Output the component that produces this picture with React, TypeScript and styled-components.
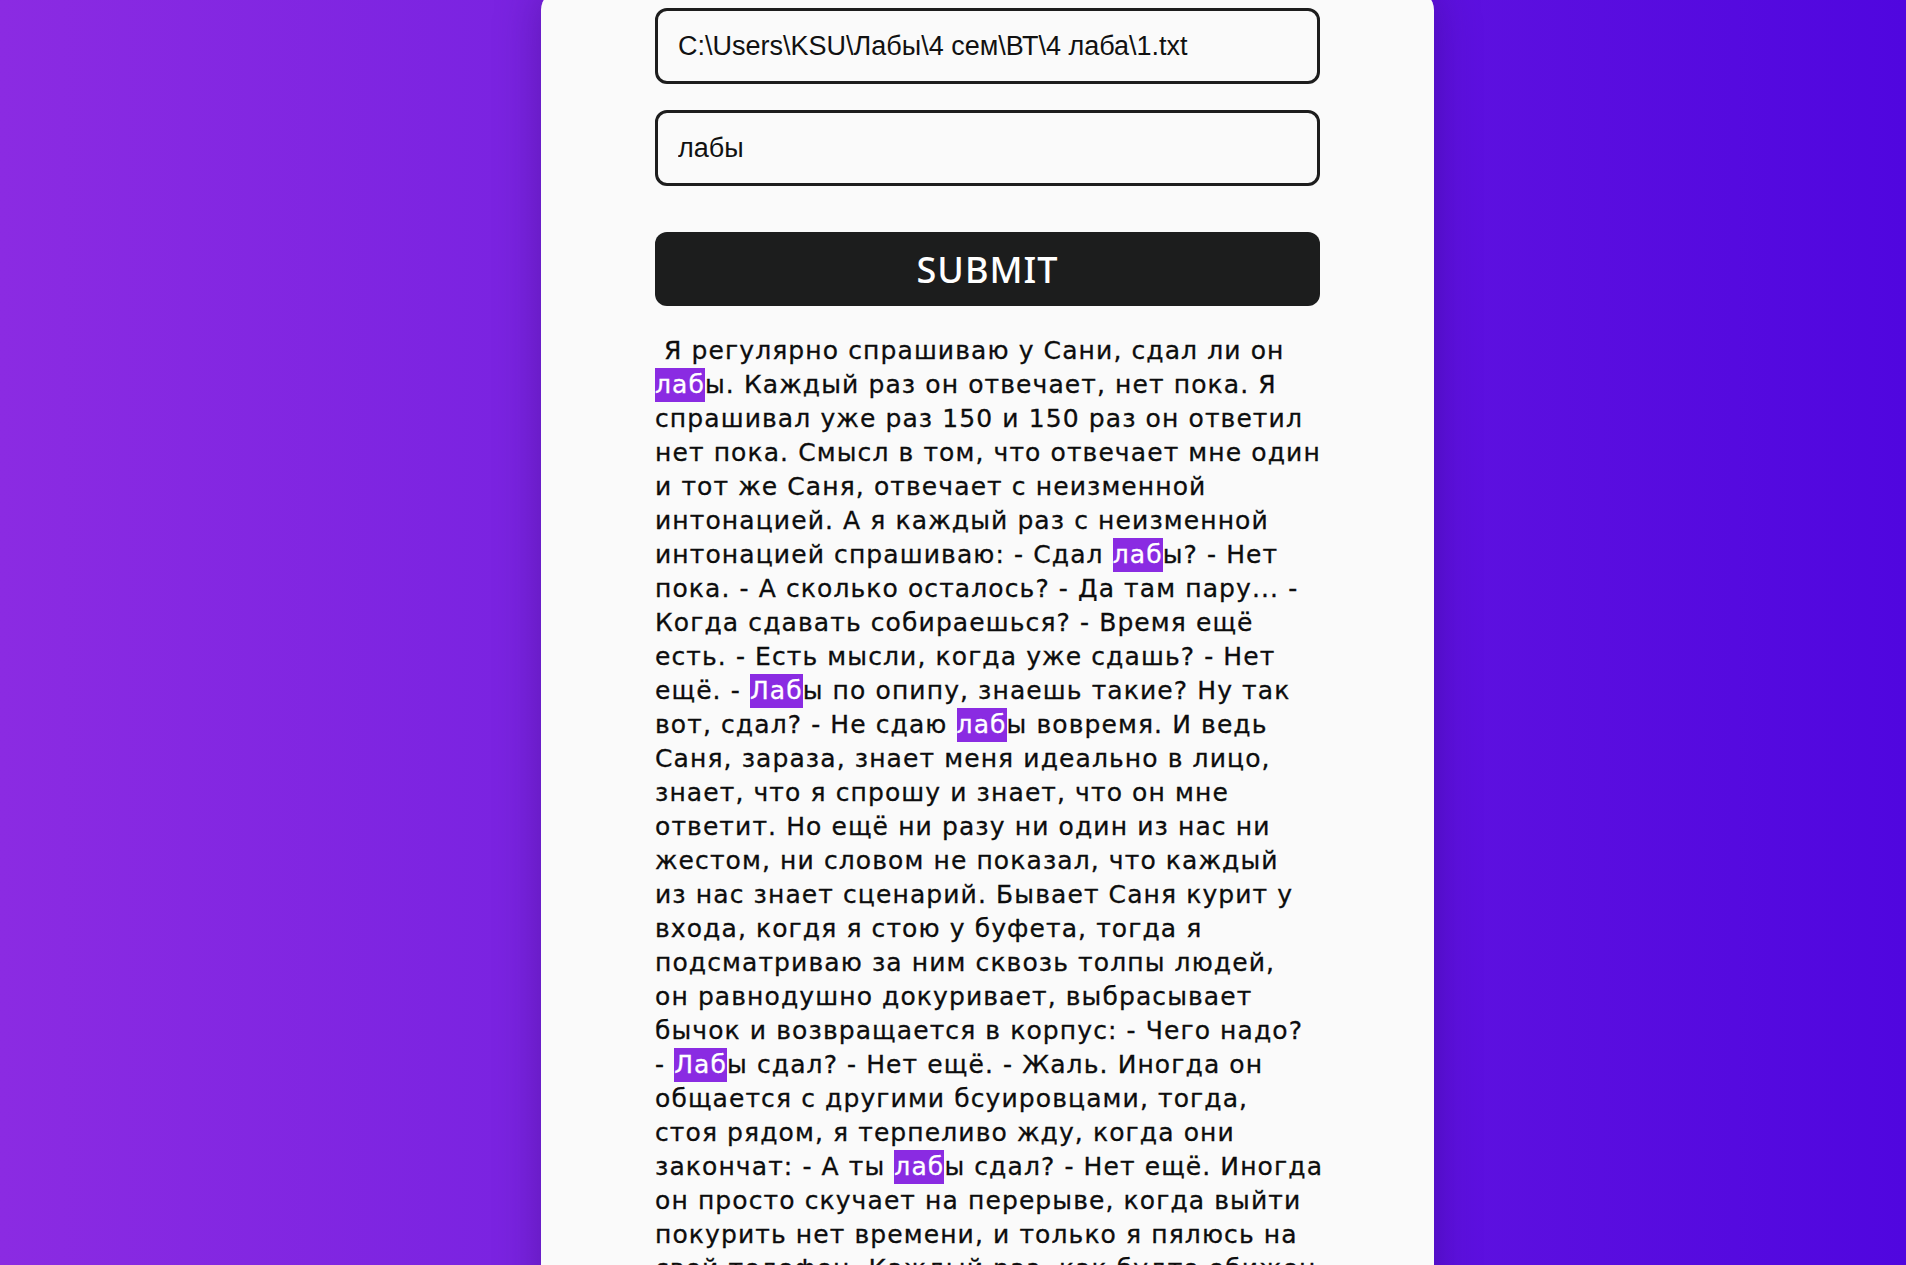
import React from "react";
import styled, { createGlobalStyle } from "styled-components";

const Global = createGlobalStyle`
  html, body {
    margin: 0;
    padding: 0;
    height: 100%;
    overflow: hidden;
  }
  body {
    background: linear-gradient(90deg, #8b2be2 0%, #6c1ce0 50%, #5006df 100%);
  }
`;

const Page = styled.main`
  display: flex;
  justify-content: center;
  align-items: flex-start;
  padding-left: 69px;
  height: 100vh;
  box-sizing: border-box;
  overflow: hidden;
`;

const Card = styled.section`
  width: 893px;
  box-sizing: border-box;
  margin-top: -10px;
  padding: 18px 114px 60px;
  background: #fafafa;
  border-radius: 20px;
  box-shadow: 0 0 45px rgba(40, 0, 90, 0.35);
  display: flex;
  flex-direction: column;
`;

const Form = styled.form`
  display: flex;
  flex-direction: column;
  gap: 26px;
`;

const Field = styled.input`
  height: 76px;
  box-sizing: border-box;
  border: 3px solid #1d1d1d;
  border-radius: 12px;
  padding: 0 20px;
  background: transparent;
  color: #111;
  font-family: "Liberation Sans", Arial, sans-serif;
  font-size: 27px;
  outline: none;
`;

const Submit = styled.button`
  margin-top: 20px;
  height: 74px;
  border: none;
  border-radius: 12px;
  background: #1c1d1d;
  color: #ffffff;
  font-family: "Noto Sans", sans-serif;
  font-size: 36px;
  font-weight: 500;
  letter-spacing: 1px;
  cursor: pointer;
`;

const Text = styled.p`
  margin: 28px 0 0;
  font-family: "DejaVu Sans", "Noto Sans", sans-serif;
  font-size: 25px;
  line-height: 34px;
  letter-spacing: 1.1px;
  color: #0d0d0d;
  -webkit-text-stroke: 0.3px #0d0d0d;
`;

const Line = styled.span`
  display: block;
  white-space: pre;
`;

const Mark = styled.span`
  display: inline-block;
  background: #8a2be2;
  color: #ffffff;
  -webkit-text-stroke: 0.3px #ffffff;
  line-height: 34px;
`;

const lines: string[] = [
  " Я регулярно спрашиваю у Сани, сдал ли он",
  "[лаб]ы. Каждый раз он отвечает, нет пока. Я",
  "спрашивал уже раз 150 и 150 раз он ответил",
  "нет пока. Смысл в том, что отвечает мне один",
  "и тот же Саня, отвечает с неизменной",
  "интонацией. А я каждый раз с неизменной",
  "интонацией спрашиваю: - Сдал [лаб]ы? - Нет",
  "пока. - А сколько осталось? - Да там пару... -",
  "Когда сдавать собираешься? - Время ещё",
  "есть. - Есть мысли, когда уже сдашь? - Нет",
  "ещё. - [Лаб]ы по опипу, знаешь такие? Ну так",
  "вот, сдал? - Не сдаю [лаб]ы вовремя. И ведь",
  "Саня, зараза, знает меня идеально в лицо,",
  "знает, что я спрошу и знает, что он мне",
  "ответит. Но ещё ни разу ни один из нас ни",
  "жестом, ни словом не показал, что каждый",
  "из нас знает сценарий. Бывает Саня курит у",
  "входа, когдя я стою у буфета, тогда я",
  "подсматриваю за ним сквозь толпы людей,",
  "он равнодушно докуривает, выбрасывает",
  "бычок и возвращается в корпус: - Чего надо?",
  "- [Лаб]ы сдал? - Нет ещё. - Жаль. Иногда он",
  "общается с другими бсуировцами, тогда,",
  "стоя рядом, я терпеливо жду, когда они",
  "закончат: - А ты [лаб]ы сдал? - Нет ещё. Иногда",
  "он просто скучает на перерыве, когда выйти",
  "покурить нет времени, и только я пялюсь на",
  "свой телефон. Каждый раз, как будто обижен.",
  "И каждый раз слышу одно и то же.",
];

function renderLine(line: string, i: number) {
  const parts = line.split(/\[(.*?)\]/);
  return (
    <Line key={i}>
      {parts.map((p, j) =>
        j % 2 === 1 ? <Mark key={j}>{p}</Mark> : <React.Fragment key={j}>{p}</React.Fragment>
      )}
    </Line>
  );
}

export default function App() {
  return (
    <>
      <Global />
      <Page>
        <Card>
          <Form onSubmit={(e) => e.preventDefault()}>
            <Field type="text" defaultValue={"C:\\Users\\KSU\\Лабы\\4 сем\\ВТ\\4 лаба\\1.txt"} />
            <Field type="text" defaultValue="лабы" />
            <Submit type="submit">SUBMIT</Submit>
          </Form>
          <Text>{lines.map(renderLine)}</Text>
        </Card>
      </Page>
    </>
  );
}
